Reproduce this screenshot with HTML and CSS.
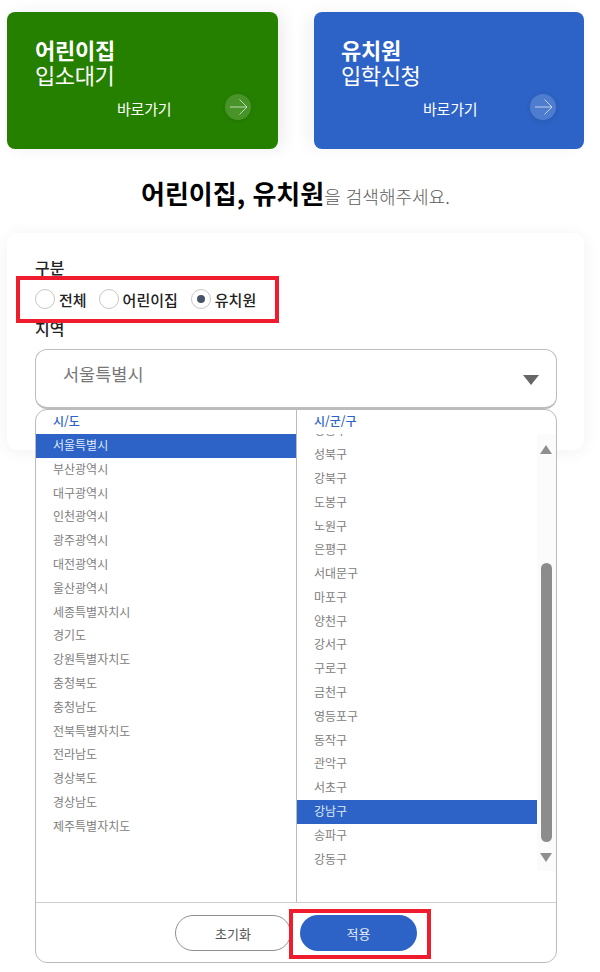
FILE: index.html
```html
<!DOCTYPE html>
<html lang="ko">
<head>
<meta charset="utf-8">
<title>어린이집, 유치원 검색</title>
<link rel="stylesheet" href="styles.css">
</head>
<body>
<div class="page">
  <div class="cards">
    <a class="card card-green">
      <strong class="card-title">어린이집</strong>
      <span class="card-sub">입소대기</span>
      <div class="card-foot">
        <span class="card-go">바로가기</span>
        <span class="card-arrow"><svg width="26" height="26" viewBox="0 0 26 26" fill="none" stroke="currentColor" stroke-width="1"><path d="M5 13H21.5M14.5 5.5L22 13L14.5 20.5"/></svg></span>
      </div>
    </a>
    <a class="card card-blue">
      <strong class="card-title">유치원</strong>
      <span class="card-sub">입학신청</span>
      <div class="card-foot">
        <span class="card-go">바로가기</span>
        <span class="card-arrow"><svg width="26" height="26" viewBox="0 0 26 26" fill="none" stroke="currentColor" stroke-width="1"><path d="M5 13H21.5M14.5 5.5L22 13L14.5 20.5"/></svg></span>
      </div>
    </a>
  </div>

  <h1 class="headline"><b>어린이집, 유치원</b><span>을 검색해주세요.</span></h1>

  <section class="panel">
    <div class="label">구분</div>
    <div class="radios">
      <label class="radio"><i class="dot"></i>전체</label>
      <label class="radio"><i class="dot"></i>어린이집</label>
      <label class="radio"><i class="dot on"></i>유치원</label>
    </div>
    <div class="label label-area">지역</div>
    <div class="select">
      <span>서울특별시</span>
      <i class="caret"></i>
    </div>

    <div class="dropdown">
      <div class="cols">
        <div class="col col-left">
          <div class="col-head">시/도</div>
          <ul class="list">
            <li class="sel">서울특별시</li>
            <li>부산광역시</li>
            <li>대구광역시</li>
            <li>인천광역시</li>
            <li>광주광역시</li>
            <li>대전광역시</li>
            <li>울산광역시</li>
            <li>세종특별자치시</li>
            <li>경기도</li>
            <li>강원특별자치도</li>
            <li>충청북도</li>
            <li>충청남도</li>
            <li>전북특별자치도</li>
            <li>전라남도</li>
            <li>경상북도</li>
            <li>경상남도</li>
            <li>제주특별자치도</li>
          </ul>
        </div>
        <div class="col col-right">
          <div class="col-head">시/군/구</div>
          <div class="scroller">
            <ul class="list list-scrolled">
              <li>성동구</li>
              <li>성북구</li>
              <li>강북구</li>
              <li>도봉구</li>
              <li>노원구</li>
              <li>은평구</li>
              <li>서대문구</li>
              <li>마포구</li>
              <li>양천구</li>
              <li>강서구</li>
              <li>구로구</li>
              <li>금천구</li>
              <li>영등포구</li>
              <li>동작구</li>
              <li>관악구</li>
              <li>서초구</li>
              <li class="sel">강남구</li>
              <li>송파구</li>
              <li>강동구</li>
            </ul>
            <div class="scrollbar">
              <i class="sb-up"></i>
              <i class="sb-thumb"></i>
              <i class="sb-down"></i>
            </div>
          </div>
        </div>
      </div>
      <div class="actions">
        <button class="btn btn-reset">초기화</button>
        <button class="btn btn-apply">적용</button>
      </div>
    </div>
  </section>
</div>
<div class="mark mark-radio"></div>
<div class="mark mark-apply"></div>
</body>
</html>
```

FILE: styles.css
```css
* { box-sizing: border-box; }
html, body { margin: 0; padding: 0; background: #fff; }
body {
  width: 600px;
  height: 972px;
  overflow: hidden;
  position: relative;
  font-family: "Noto Sans CJK KR", "Noto Sans", sans-serif;
  color: #111;
}
.page { padding: 12px 16px 0 7px; }

.cards { display: flex; justify-content: space-between; }
.card {
  display: flex;
  flex-direction: column;
  width: 271px;
  height: 137px;
  padding: 22px 28px 0;
  border-radius: 8px;
  color: #fff;
  box-shadow: 6px 0 16px rgba(0,0,0,.07);
}
.card-blue { width: 270px; box-shadow: -6px 0 16px rgba(0,0,0,.05); padding-left: 27px; }
.card-green { background: #268000; }
.card-blue { background: #2d63c6; }
.card-title { font-size: 22px; line-height: 30px; font-weight: 700; letter-spacing: -.2px; }
.card-sub { font-size: 22px; line-height: 24px; margin-top: -2px; font-weight: 400; letter-spacing: -.4px; }
.card-foot { display: flex; align-items: center; margin-top: 7px; height: 28px; }
.card-go { font-size: 15px; line-height: 20px; margin-left: 82px; margin-top: 3px; letter-spacing: -.2px; }
.card-arrow {
  width: 26px; height: 26px;
  margin-left: auto; margin-right: -1px;
  border-radius: 50%;
  background: rgba(255,255,255,.16);
  color: rgba(255,255,255,.65);
  box-shadow: 0 1px 6px rgba(0,0,0,.1);
  display: block;
}
.card-blue .card-arrow { margin-right: 0; }
.card-arrow svg { display: block; }

.headline {
  margin: 24px 0 0;
  height: 40px;
  padding-left: 134px;
  font-size: 18px;
  font-weight: 400;
  line-height: 40px;
  white-space: nowrap;
}
.headline b { font-size: 26px; font-weight: 700; color: #000; }
.headline span { color: #5c5c5c; font-weight: 300; }

.panel {
  position: relative;
  margin-top: 20px;
  width: 577px;
  height: 217px;
  padding: 21px 28px 0;
  background: #fff;
  border-radius: 10px;
  box-shadow: 0 2px 18px rgba(0,0,0,.06);
}
.label { font-size: 16px; line-height: 26px; height: 26px; color: #222; font-weight: 500; }
.radios { display: flex; align-items: center; height: 32px; margin-top: 3px; }
.radio {
  display: flex; align-items: center;
  font-size: 15px; font-weight: 500; color: #222;
  margin-right: 13px;
}
.radio:first-child { margin-right: 12px; }
.dot {
  width: 20px; height: 20px;
  border-radius: 50%;
  border: 1px solid #c6c6c6;
  background: #fff;
  margin-right: 4px;
  position: relative;
}
.dot.on::after {
  content: "";
  position: absolute;
  left: 5px; top: 5px;
  width: 8px; height: 8px;
  border-radius: 50%;
  background: #47546a;
}
.label-area { margin-top: 0; }
.select {
  display: flex;
  align-items: center;
  justify-content: space-between;
  width: 522px;
  height: 60px;
  margin-top: 8px;
  padding: 0 17px 0 27px;
  border: 1px solid #bdbdbd;
  border-bottom-width: 2px;
  border-radius: 12px;
  font-size: 17.5px;
  color: #777;
}
.select span { margin-top: -10px; }
.caret {
  width: 0; height: 0;
  border-left: 8px solid transparent;
  border-right: 8px solid transparent;
  border-top: 10px solid #666;
  margin-top: 2px;
}

.dropdown {
  position: absolute;
  left: 28px;
  top: 176px;
  width: 522px;
  height: 554px;
  background: #fff;
  border: 1px solid #bbb;
  border-radius: 12px;
  display: flex;
  flex-direction: column;
  overflow: hidden;
}
.cols { display: flex; height: 493px; border-bottom: 1px solid #ccc; flex: none; }
.col { position: relative; }
.col-left { width: 261px; border-right: 1px solid #bbb; }
.col-right { flex: 1; }
.col-head {
  height: 24px;
  padding-left: 17px;
  font-size: 12px;
  line-height: 22px;
  color: #2d63c6;
  font-weight: 500;
}
.list { list-style: none; margin: 0; padding: 0; }
.list li {
  height: 23.8px;
  line-height: 22px;
  padding-left: 17px;
  font-size: 12px;
  color: #808080;
}
.list li.sel { background: #2d63c6; color: #dfe8f8; }
.scroller { position: relative; height: 438px; overflow: hidden; }
.list-scrolled { margin-top: -14.7px; width: 241px; }
.scrollbar {
  position: absolute;
  top: 0; right: 0;
  width: 19px; height: 437px;
  background: #fbfbfb;
}
.sb-up, .sb-down, .sb-thumb { position: absolute; display: block; }
.sb-up {
  left: 3px; top: 11px;
  width: 0; height: 0;
  border-left: 6px solid transparent;
  border-right: 6px solid transparent;
  border-bottom: 9px solid #8e8e8e;
}
.sb-down {
  left: 3px; top: 419px;
  width: 0; height: 0;
  border-left: 6px solid transparent;
  border-right: 6px solid transparent;
  border-top: 9px solid #8e8e8e;
}
.sb-thumb {
  left: 4px; top: 129px;
  width: 11px; height: 279px;
  border-radius: 6px;
  background: #8c8c8c;
}

.actions { display: flex; justify-content: flex-start; padding: 12px 0 0 139px; gap: 9px; }
.btn {
  width: 117px;
  height: 36px;
  border-radius: 18px;
  font: 400 13px "Noto Sans CJK KR", "Noto Sans", sans-serif;
  padding: 0;
}
.btn-reset { background: #fff; border: 1px solid #8f8f8f; color: #555; width: 116px; }
.btn-apply { background: #2d63c6; border: 0; color: #e6edf9; }

.mark { position: absolute; border: 4px solid #ee1c2c; pointer-events: none; }
.mark-radio { left: 16px; top: 276px; width: 263px; height: 47px; }
.mark-apply { left: 289px; top: 909px; width: 142px; height: 50px; }
```
